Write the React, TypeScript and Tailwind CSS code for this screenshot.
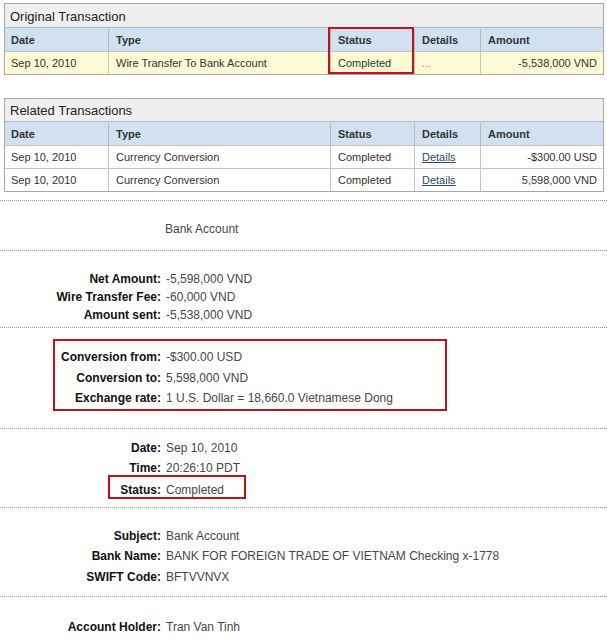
import React from "react";

type Row = { date: string; type: string; status: string; details: string; amount: string; link?: boolean };

const cols = "grid grid-cols-[103px_222px_84px_66px_1fr]";

function TxTable({
  title,
  rows,
  highlight,
  titleH,
  rowH,
}: {
  title: string;
  rows: Row[];
  highlight?: boolean;
  titleH: string;
  rowH: string;
}) {
  return (
    <div className="relative mx-[4px] w-[600px] border border-[#a8a8a8]">
      {/* title bar */}
      <div className={`${titleH} flex items-center bg-[#efefef] px-[5px] pt-[2px] text-[13px] text-[#222]`}>{title}</div>

      {/* header row */}
      <div className={`${cols} h-[24px] border-t border-[#b9b9b9] bg-[#d1e1f1] pt-[1px] text-[11px] font-bold text-[#333]`}>
        <div className="flex items-center pl-[6px]">Date</div>
        <div className="flex items-center border-l border-[#b9b9b9] pl-[7px]">Type</div>
        <div className="flex items-center border-l border-[#b9b9b9] pl-[7px]">Status</div>
        <div className="flex items-center border-l border-[#b9b9b9] pl-[7px]">Details</div>
        <div className="flex items-center border-l border-[#b9b9b9] pl-[7px]">Amount</div>
      </div>

      {rows.map((r, i) => (
        <div
          key={i}
          className={`${cols} ${rowH} border-t border-[#c4c4c4] text-[11px] text-[#333] ${highlight ? "bg-[#fefad6]" : "bg-white"}`}
        >
          <div className="flex items-center pl-[6px] pt-[1px]">{r.date}</div>
          <div className="flex items-center border-l border-[#c4c4c4] pl-[7px] pt-[1px]">{r.type}</div>
          <div className="flex items-center border-l border-[#c4c4c4] pl-[7px] pt-[1px]">{r.status}</div>
          <div className="flex items-center border-l border-[#c4c4c4] pl-[7px] pt-[1px]">
            {r.link ? <span className="text-[#2c4a6b] underline">{r.details}</span> : <span className="text-[#999]">{r.details}</span>}
          </div>
          <div className="flex items-center justify-end border-l border-[#c4c4c4] pr-[6px] pt-[1px]">{r.amount}</div>
        </div>
      ))}

      {/* red annotation around Status column */}
      {highlight && (
        <div className="absolute left-[323px] top-[23px] h-[47px] w-[86px] border-2 border-[#c4121c]" />
      )}
    </div>
  );
}

function Dots() {
  return <div className="border-t border-dotted border-[#9d9d9d]" />;
}

function Field({ label, value, h = "h-[20px]", extra = "" }: { label: string; value: string; h?: string; extra?: string }) {
  return (
    <div className={`flex ${h} items-center ${extra}`}>
      <div className="w-[161px] shrink-0 text-right font-bold text-[#111]">{label}</div>
      <div className="pl-[5px] text-[#474747]">{value}</div>
    </div>
  );
}

export default function App() {
  return (
    <div className="h-[640px] w-[607px] overflow-hidden bg-white pt-[3px] font-['Liberation_Sans',Arial,sans-serif] text-[12px]">
      <TxTable
        title="Original Transaction"
        titleH="h-[23px]"
        rowH="h-[23px]"
        highlight
        rows={[
          {
            date: "Sep 10, 2010",
            type: "Wire Transfer To Bank Account",
            status: "Completed",
            details: "...",
            amount: "-5,538,000 VND",
          },
        ]}
      />

      <div className="mt-[23px]">
        <TxTable
          title="Related Transactions"
          titleH="h-[22px]"
          rowH="h-[23px]"
          rows={[
            { date: "Sep 10, 2010", type: "Currency Conversion", status: "Completed", details: "Details", amount: "-$300.00 USD", link: true },
            { date: "Sep 10, 2010", type: "Currency Conversion", status: "Completed", details: "Details", amount: "5,598,000 VND", link: true },
          ]}
        />
      </div>

      <div className="mt-[8px]">
        <Dots />
      </div>

      <div className="flex h-[49px] items-center pl-[165px] pt-[6px] text-[#474747]">Bank Account</div>

      <Dots />
      <div className="pb-[3px] pt-[19px]">
        <Field label="Net Amount:" value="-5,598,000 VND" h="h-[18px]" />
        <Field label="Wire Transfer Fee:" value="-60,000 VND" h="h-[18px]" />
        <Field label="Amount sent:" value="-5,538,000 VND" h="h-[18px]" />
      </div>

      <Dots />
      <div className="pb-[17px] pt-[11px]">
        <div className="ml-[53px] w-[394px] border-2 border-[#c4121c] pt-[6px]">
          <div className="-ml-[55px]">
            <Field label="Conversion from:" value="-$300.00 USD" h="h-[20.5px]" />
            <Field label="Conversion to:" value="5,598,000 VND" h="h-[20.5px]" />
            <Field label="Exchange rate:" value="1 U.S. Dollar = 18,660.0 Vietnamese Dong" h="h-[20.5px]" />
          </div>
        </div>
      </div>

      <Dots />
      <div className="pb-[8px] pt-[9px]">
        <Field label="Date:" value="Sep 10, 2010" />
        <Field label="Time:" value="20:26:10 PDT" />
        <div className="relative -mt-[3px]">
          <Field label="Status:" value="Completed" h="h-[24px]" extra="pt-[7px]" />
          <div className="absolute left-[108px] top-0 h-[24px] w-[138px] border-2 border-[#c4121c]" />
        </div>
      </div>

      <Dots />
      <div className="pb-[9px] pt-[18px]">
        <Field label="Subject:" value="Bank Account" h="h-[20.5px]" />
        <Field label="Bank Name:" value="BANK FOR FOREIGN TRADE OF VIETNAM Checking x-1778" h="h-[20.5px]" />
        <Field label="SWIFT Code:" value="BFTVVNVX" h="h-[20.5px]" />
      </div>

      <Dots />
      <div className="pt-[20px]">
        <Field label="Account Holder:" value="Tran Van Tinh" />
      </div>
    </div>
  );
}
